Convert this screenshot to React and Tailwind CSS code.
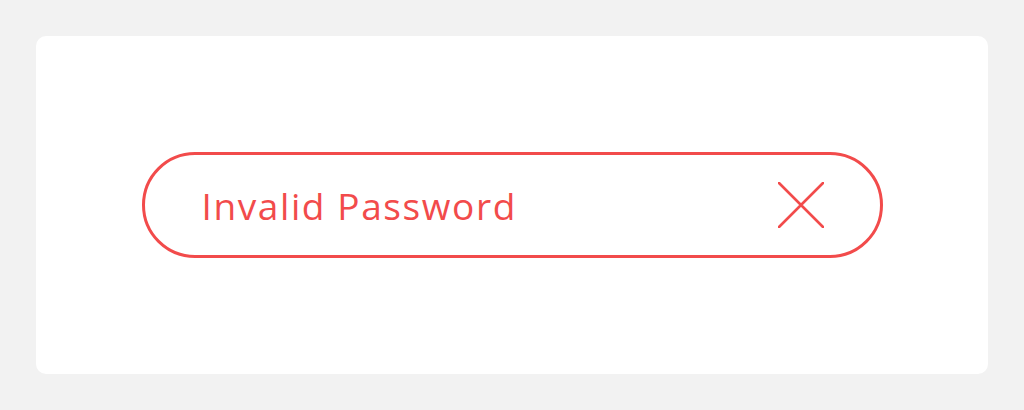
import React from 'react';

const CloseIcon = () => (
  <svg width="46" height="46" viewBox="0 0 46 46" fill="none" stroke="#f24b4b" strokeWidth="2.6" strokeLinecap="round">
    <path d="M1 1L45 45M45 1L1 45" />
  </svg>
);

const App = () => {
  return (
    <div className="h-[410px] w-[1024px] bg-[#f2f2f2] p-[36px]">
      <div className="flex h-[338px] w-[952px] items-center justify-center rounded-[10px] bg-white">
        <div className="flex h-[106px] w-[741px] items-center justify-between rounded-full border-[3px] border-[#f24b4b] pl-[57px] pr-[56px]">
          <span
            className="text-[37px] leading-none font-normal tracking-[1.6px] text-[#f24b4b]"
            style={{ fontFamily: '"Open Sans", "Noto Sans", sans-serif' }}
          >
            Invalid Password
          </span>
          <CloseIcon />
        </div>
      </div>
    </div>
  );
};

export default App;
